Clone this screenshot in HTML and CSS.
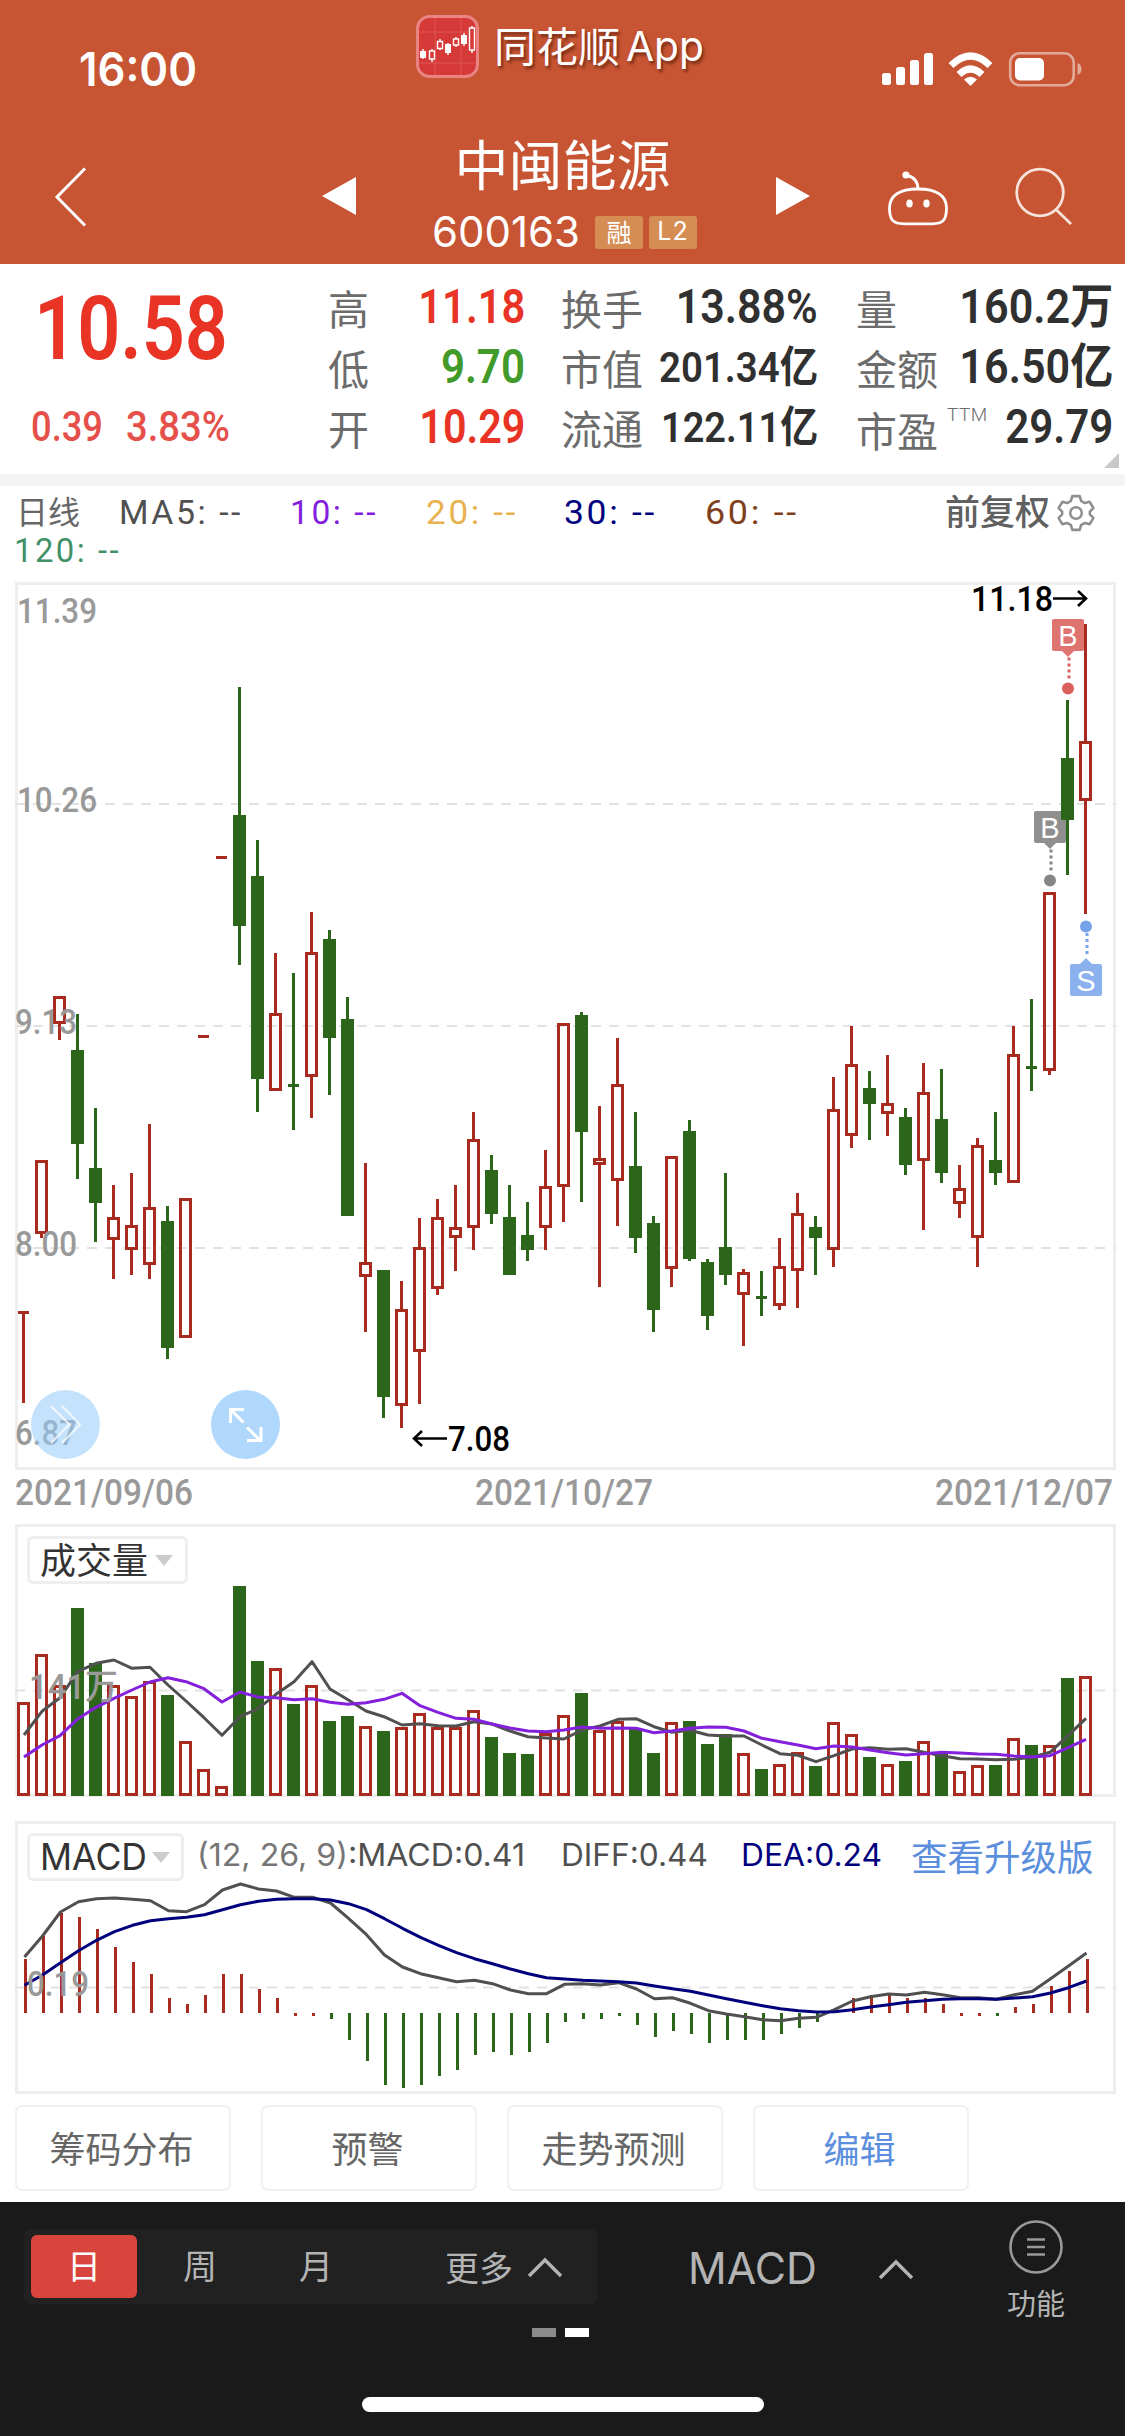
FILE: index.html
```html
<!DOCTYPE html>
<html lang="zh-CN">
<head>
<meta charset="utf-8">
<title>中闽能源 600163</title>
<link rel="stylesheet" href="styles.css">
</head>
<body>
<header class="top">
  <div class="status">
    <span class="clock fit" data-w="118">16:00</span>
    <svg class="logo" viewBox="0 0 63 63" width="63" height="63">
      <rect x="1.5" y="1.5" width="60" height="60" rx="12" fill="#d63a38" stroke="#e98482" stroke-width="3"/>
      <path d="M19 3V60M45 3V60M3 17H60M3 48H60" stroke="#dd5552" stroke-width="1"/>
      <path d="M7 34V44M16 34V47M24 24V35M32 28V40M40 22V32M48 18V31M56 11V38" stroke="#fff" stroke-width="1.4"/>
      <path d="M4 36h6v7h-6zM29 29h6v9h-6zM45 20h6v9h-6z" fill="#fff"/>
      <path d="M13.500 36h5v8h-5zM21.500 26.500h5v7h-5zM37.500 24h5v6h-5zM53.500 13h5v22h-5z" fill="#d63a38" stroke="#fff" stroke-width="1.4"/>
    </svg>
    <span class="app"><span class="fit" data-w="126">同花顺</span><span class="fit app-latin" data-w="78">App</span></span>
    <svg class="phone" viewBox="880 50 204 38" width="204" height="38" fill="#fff">
      <rect x="882" y="73" width="9" height="12" rx="2.500"/><rect x="896" y="67" width="9" height="18" rx="2.500"/><rect x="910" y="60" width="9" height="25" rx="2.500"/><rect x="924" y="53" width="9" height="32" rx="2.500"/>
      <g fill="none" stroke="#fff" stroke-width="7"><path d="M951 65.500Q970.500 46.500 990 65.500"/><path d="M959 74.500Q970.500 63.500 982 74.500"/></g>
      <path d="M964 79.500Q970.500 74 977 79.500L970.500 86Z"/>
      <rect x="1010.200" y="53.200" width="63.500" height="32" rx="9.500" fill="none" stroke="#e3a999" stroke-width="2.600"/>
      <rect x="1015" y="58" width="29" height="22.500" rx="5"/>
      <path d="M1077.500 63q4 1.500 4 6t-4 6z" fill="#e3a999"/>
    </svg>
  </div>
  <div class="nav">
    <svg class="back" viewBox="54 166 33 62" width="33" height="62"><path d="M85 168.500L57 197L85 225.500" fill="none" stroke="#fff" stroke-width="3"/></svg>
    <svg class="prev" viewBox="0 0 34 38" width="34" height="38"><path d="M0 19L34 0V38Z" fill="#fff"/></svg>
    <div class="title">
      <h1>中闽能源</h1>
      <div class="code"><span class="fit code-num" data-w="148">600163</span><span class="badge">融</span><span class="badge l2">L2</span></div>
    </div>
    <svg class="next" viewBox="0 0 34 38" width="34" height="38"><path d="M34 19L0 0V38Z" fill="#fff"/></svg>
    <svg class="robot" viewBox="886 169 64 58" width="64" height="58" fill="none" stroke="#fff" stroke-width="2.800">
      <path d="M918 189C899 189 889.500 196 889.500 208C889.500 220 893 223.800 904 223.800H932C943 223.800 946.500 220 946.500 208C946.500 196 937 189 918 189Z"/>
      <path d="M918 189Q917.500 177.500 907 175.500"/><circle cx="906" cy="175" r="2.200" fill="#fff"/>
      <g fill="#fff" stroke="none"><ellipse cx="909.500" cy="203.500" rx="3.200" ry="4"/><ellipse cx="926.500" cy="203.500" rx="3.200" ry="4"/></g>
    </svg>
    <svg class="search" viewBox="1014 167 59 59" width="59" height="59" fill="none" stroke="#f7e2da" stroke-width="2.800"><circle cx="1040" cy="192.500" r="23.300"/><path d="M1056 209.500L1071 224"/></svg>
  </div>
</header>

<section class="quote">
  <div class="price">
    <div class="last"><span class="fit" data-w="194">10.58</span></div>
    <div class="change"><span class="fit" data-w="72">0.39</span><span class="fit" data-w="104">3.83%</span></div>
  </div>
  <dl class="stats c1">
    <dt>高</dt><dd class="up"><span class="fit" data-w="107">11.18</span></dd>
    <dt>低</dt><dd class="down"><span class="fit" data-w="84">9.70</span></dd>
    <dt>开</dt><dd class="up"><span class="fit" data-w="106">10.29</span></dd>
  </dl>
  <dl class="stats c2">
    <dt>换手</dt><dd><span class="fit" data-w="142">13.88%</span></dd>
    <dt>市值</dt><dd class="small"><span class="fit" data-w="159">201.34亿</span></dd>
    <dt>流通</dt><dd class="small"><span class="fit" data-w="157">122.11亿</span></dd>
  </dl>
  <dl class="stats c3">
    <dt>量</dt><dd><span class="fit" data-w="154">160.2万</span></dd>
    <dt>金额</dt><dd><span class="fit" data-w="154">16.50亿</span></dd>
    <dt class="pe">市盈<sup>TTM</sup></dt><dd><span class="fit" data-w="108">29.79</span></dd>
  </dl>
  <i class="corner"></i>
</section>

<section class="ma">
  <div class="ma-list">
    <span class="cn">日线</span><span class="m5 fit" data-w="124">MA5: --</span><span class="m10 fit" data-w="88">10: --</span><span class="m20 fit" data-w="92">20: --</span><span class="m30 fit" data-w="93">30: --</span><span class="m60 fit" data-w="94">60: --</span>
    <span class="adjust">前复权</span>
    <svg class="gear" viewBox="0 0 36 36" width="38" height="38" fill="none" stroke="#8f8f8f" stroke-width="2.400" stroke-linejoin="round"><path d="M14.500 2h7l1.300 4.600 3.600 2 4.600-1.200 3.500 6-3.400 3.300v2.600l3.400 3.300-3.500 6-4.600-1.200-3.600 2L21.500 34h-7l-1.300-4.600-3.600-2-4.600 1.200-3.500-6 3.400-3.300v-2.600L1.500 13.400l3.500-6 4.600 1.200 3.600-2z"/><circle cx="18" cy="18" r="5.500"/></svg>
  </div>
  <span class="m120 fit" data-w="107">120: --</span>
</section>

<svg id="kline" class="chart" viewBox="15 582 1101 888" width="1101" height="888"></svg>
<div class="dates"><span class="fit" data-w="178">2021/09/06</span><span class="fit" data-w="178">2021/10/27</span><span class="fit" data-w="178">2021/12/07</span></div>

<section class="panel">
  <svg id="volume" class="chart" viewBox="15 1524 1101 273" width="1101" height="273"></svg>
  <div class="panel-head"><button class="pick vol"><span>成交量</span><i></i></button></div>
</section>

<section class="panel">
  <svg id="macd" class="chart" viewBox="15 1821 1101 273" width="1101" height="273"></svg>
  <div class="panel-head macd-head">
    <button class="pick"><span class="fit" data-w="107">MACD</span><i></i></button>
    <span class="param fit" data-w="328"><em>(12, 26, 9)</em>:MACD:0.41</span>
    <span class="diff fit" data-w="147">DIFF:0.44</span>
    <span class="dea fit" data-w="141">DEA:0.24</span>
    <a class="upgrade">查看升级版</a>
  </div>
</section>

<div class="tools"><button>筹码分布</button><button>预警</button><button>走势预测</button><button class="edit">编辑</button></div>

<footer class="bar">
  <div class="bar-row">
    <div class="periods">
      <span class="on">日</span><span>周</span><span>月</span>
      <span class="more">更多<svg viewBox="0 0 36 22" width="36" height="22"><path d="M2 20L18 4L34 20" fill="none" stroke="#b4b4b4" stroke-width="3.400"/></svg></span>
    </div>
    <span class="ind fit" data-w="129">MACD</span>
    <svg class="ind-up" viewBox="0 0 36 22" width="36" height="22"><path d="M2 20L18 4L34 20" fill="none" stroke="#b4b4b4" stroke-width="3.400"/></svg>
    <div class="func">
      <svg viewBox="0 0 56 56" width="56" height="56" fill="none" stroke="#999" stroke-width="2.600"><circle cx="28" cy="28" r="25.500"/><path d="M19 20.500H37M19 28H37M19 35.500H37"/></svg>
      功能
    </div>
  </div>
  <div class="pages"><i></i><i class="cur"></i></div>
  <div class="home"></div>
</footer>
<script src="chart.js"></script>
</body>
</html>
```
FILE: styles.css
```css
* { box-sizing: border-box; }
body { margin: 0; width: 1125px; background: #fff; font-family: "Noto Sans CJK SC", sans-serif; color: #303030; }
h1, dl, dt, dd { margin: 0; font-weight: 400; }
button { font: inherit; color: inherit; background: #fff; padding: 0; }
svg { display: block; flex: none; }
em { font-style: normal; }
.fit { display: inline-block; white-space: nowrap; transform-origin: 0 50%; flex: none; }

.top { height: 264px; background: #c75533; color: #fff; }
.status { height: 100px; display: flex; align-items: flex-start; padding-left: 79px; }
.clock { font: 600 46px/60px Inter, sans-serif; margin-top: 39px; }
.logo { margin: 15px 0 0 219px; }
.app { display: flex; margin: 14px 0 0 15px; font-size: 41px; line-height: 60px; text-shadow: 2px 3px 3px rgba(70, 20, 5, .6); width: 371px; gap: 6px; }
.app-latin { font-family: Inter, sans-serif; line-height: 64px; }
.phone { margin: 50px 0 0 15px; }
.nav { height: 164px; display: flex; align-items: flex-start; }
.back { margin: 66px 0 0 54px; }
.prev { margin: 77px 0 0 235px; }
.title { width: 420px; display: flex; flex-direction: column; align-items: center; }
.title h1 { font-size: 54px; line-height: 70px; margin-top: 28px; margin-left: -7px; }
.code { display: flex; align-items: center; margin-top: 14px; width: 266px; height: 40px; margin-left: -2px; }
.code-num { font: 400 42px/40px Inter, sans-serif; }
.badge { width: 48px; height: 33px; border-radius: 3px; background: #d58d54; font-size: 25px; line-height: 31px; text-align: center; margin-left: 15px; flex: none; }
.badge + .badge { margin-left: 6px; font-family: Inter, sans-serif; letter-spacing: 1px; }
.next { margin: 77px 0 0; }
.robot { margin: 69px 0 0 76px; }
.search { margin: 67px 0 0 64px; }

.quote { position: relative; height: 222px; border-bottom: 12px solid #f4f4f4; display: flex; font-family: Roboto, "Noto Sans CJK SC", sans-serif; }
.price { width: 328px; color: #e93325; }
.last { font-size: 89px; font-weight: 600; line-height: 100px; margin: 15px 0 0 34px; }
.change { display: flex; gap: 23px; margin: 23px 0 0 31px; font-size: 42px; font-weight: 500; line-height: 50px; color: #e5504a; }
.stats { display: grid; grid-template-columns: auto 1fr; grid-auto-rows: 60px; padding-top: 16px; line-height: 60px; }
.stats dt { font-size: 41px; color: #6c6c6c; font-family: "Noto Sans CJK SC", sans-serif; white-space: nowrap; line-height: 54px; }
.stats .pe { line-height: 58px; }
.stats dd { font-size: 48px; font-weight: 600; text-align: right; line-height: 54px; }
.stats dd.small { font-size: 43px; }
.stats .up { color: #e93325; }
.stats .down { color: #429a2a; }
.stats sup { font: 300 19px/19px Roboto, sans-serif; vertical-align: 26px; margin: 0 -60px 0 9px; letter-spacing: .5px; }
.c1 { width: 197px; }
.c2 { width: 257px; margin-left: 36px; }
.c3 { width: 257px; margin-left: 38px; }
.corner { position: absolute; right: 6px; bottom: 6px; border-left: 15px solid transparent; border-bottom: 15px solid #c8c8c8; }

.ma { height: 96px; padding: 4px 0 0 16px; font: 400 33px/38px Roboto, "Noto Sans CJK SC", sans-serif; letter-spacing: 2.5px; }
.ma-list { display: flex; height: 42px; }
.cn { width: 103px; font-size: 32px; line-height: 40px; color: #666; font-family: "Noto Sans CJK SC"; letter-spacing: 0; }
.ma-list .fit { line-height: 45px; }
.m5 { color: #505050; }
.m10 { color: #8420dc; margin-left: 47px; }
.m20 { color: #e9b250; margin-left: 48px; }
.m30 { color: #00007d; margin-left: 46px; }
.m60 { color: #7f3f1d; margin-left: 48px; }
.m120 { color: #419068; line-height: 36px; margin-left: -2px; }
.adjust { margin-left: 146px; width: 112px; font: 500 35px/40px "Noto Sans CJK SC"; color: #606060; letter-spacing: 0; }
.gear { margin-top: 4px; }

.chart { margin-left: 15px; overflow: visible; }
.chart text { font-family: Roboto, "Noto Sans CJK SC", sans-serif; }
.axis { font-size: 35px; font-weight: 500; fill: #999; }
.flag { font-size: 35px; font-weight: 500; fill: #000; }
.chart .tag { font-family: "Liberation Sans", sans-serif; font-size: 29px; fill: #fff; text-anchor: middle; }
.dates { height: 54px; margin: 0 12px 0 15px; display: flex; justify-content: space-between; font: 500 36px/46px Roboto, sans-serif; color: #999; }

.panel { display: grid; height: 273px; margin-bottom: 24px; }
.panel > * { grid-area: 1 / 1; }
.panel-head { padding: 12px 0 0 27px; display: flex; align-items: flex-start; }
.pick { width: 157px; height: 48px; border: 3px solid #eee; border-radius: 6px; padding-left: 10px; display: flex; align-items: center; font-size: 36px; line-height: 42px; color: #333; }
.pick .fit { font: 400 37px/42px Inter, sans-serif; }
.pick.vol { width: 161px; }
.pick.vol span { margin-top: -4px; }
.pick i { border: 9px solid transparent; border-top: 11px solid #ccc; border-bottom: 0; margin-left: 5px; }
.pick.vol i { margin-left: 7px; }
.macd-head .fit { font-family: Inter, sans-serif; font-size: 31px; line-height: 44px; color: #505050; }
.macd-head .pick .fit { font-size: 37px; line-height: 42px; color: #333; }
.macd-head em { color: #757575; }
.param { margin-left: 13px; }
.diff { margin-left: 36px; }
.macd-head .dea { margin-left: 33px; color: #00007d; }
.upgrade { margin-left: 29px; font-size: 36.500px; line-height: 45px; color: #5b8fdd; }

.tools { display: flex; gap: 30px; padding-left: 15px; height: 108px; margin-top: -13px; }
.tools button { width: 216px; height: 86px; border: 2px solid #f0f0f0; border-radius: 7px; font-size: 36px; line-height: 78px; padding: 0 3px 3px 0; color: #666; }
.tools .edit { color: #5b8fdd; }

.bar { height: 234px; margin-top: -11px; background: #1a1a1a; color: #b4b4b4; }
.bar-row { height: 126px; display: flex; align-items: flex-start; padding-left: 24px; }
.periods { width: 573px; height: 75px; margin-top: 27px; padding: 6px 7px; background: #212121; border-radius: 6px; display: flex; gap: 10px; font-size: 34px; line-height: 60px; text-align: center; }
.periods span { width: 106px; height: 63px; border-radius: 6px; }
.periods .on { background: #d9453c; color: #fff; }
.periods .more { width: 130px; margin-left: 66px; display: flex; align-items: center; gap: 14px; }
.ind { font: 400 44px/60px Inter, sans-serif; margin: 36px 0 0 91px; }
.ind-up { margin: 56px 0 0 61px; }
.func { margin: 17px 0 0 92px; width: 60px; display: flex; flex-direction: column; align-items: center; font-size: 29px; line-height: 54px; white-space: nowrap; }
.pages { display: flex; justify-content: center; gap: 9px; margin-right: 4px; }
.pages i { width: 24px; height: 9px; background: #8c8c8c; }
.pages .cur { background: #fff; }
.home { width: 402px; height: 15px; margin: 60px auto 0; border-radius: 8px; background: #fff; }
```
FILE: chart.js
```js
const UP = '#a92b20', DOWN = '#2c661a';

// Scale condensed labels to their column width.
document.querySelectorAll('.fit').forEach(el => {
  const n = el.getBoundingClientRect().width, w = +el.dataset.w;
  el.style.transform = `scaleX(${w / n})`;
  if (el.closest('dd')) { el.style.transformOrigin = '100% 50%'; el.style.marginLeft = (w - n) + 'px'; }
  else el.style.marginRight = (w - n) + 'px';
});

const rect = (x, y, w, h, c) => `<rect x="${x}" y="${y}" width="${w}" height="${h}" fill="${c}"/>`;
const hollow = (x, y, w, h) => `<rect x="${x + 1.5}" y="${y + 1.5}" width="${w - 3}" height="${h - 3}" fill="none" stroke="${UP}" stroke-width="3"/>`;
const frame = (y, h) => `<rect x="16.5" y="${y + 1.5}" width="1098" height="${h - 3}" fill="none" stroke="#eee" stroke-width="3"/>`;
const dash = y => `<path d="M15 ${y}H1116" stroke="#e2e2e2" stroke-width="2" stroke-dasharray="10 8"/>`;
const text = (x, y, w, s, c) => `<text x="${x}" y="${y}" class="${c}" textLength="${w}" lengthAdjust="spacingAndGlyphs">${s}</text>`;
const line = (x0, base, vs, c) => `<polyline fill="none" stroke="${c}" stroke-width="3" stroke-linejoin="round" points="${vs.map((v, i) => (x0 + 18 * i) + ',' + (base + v / 3).toFixed(1)).join(' ')}"/>`;

// [rising, high, body top, body bottom, low]
const K = [[1,1311,1311,1314,1403],[1,1160,1160,1234,1238],[1,996,996,1024,1040],[0,1014,1050,1144,1179],[0,1108,1168,1203,1242],[1,1185,1217,1240,1279],[1,1173,1225,1250,1275],[1,1124,1207,1265,1279],[0,1206,1221,1348,1359],[1,1198,1198,1338,1338],[1,1035,1035,1038,1038],[1,856,856,859,859],[0,687,815,926,965],[0,840,876,1079,1112],[1,953,1013,1091,1091],[0,973,1084,1087,1130],[1,912,952,1077,1118],[0,930,939,1038,1095],[0,997,1019,1216,1216],[1,1163,1262,1277,1332],[0,1270,1270,1397,1418],[1,1281,1309,1406,1428],[1,1218,1247,1352,1404],[1,1199,1217,1289,1295],[1,1185,1227,1238,1271],[1,1112,1139,1228,1250],[0,1155,1170,1214,1224],[0,1185,1217,1275,1275],[0,1202,1235,1250,1261],[1,1150,1186,1228,1250],[1,1023,1023,1187,1222],[0,1012,1015,1132,1202],[1,1106,1158,1165,1287],[1,1038,1084,1181,1226],[0,1112,1166,1238,1253],[0,1216,1223,1310,1332],[1,1156,1156,1269,1287],[0,1120,1131,1259,1261],[0,1259,1262,1316,1330],[0,1173,1247,1275,1285],[1,1269,1272,1295,1346],[0,1271,1296,1299,1316],[1,1238,1266,1306,1310],[1,1193,1213,1271,1308],[0,1216,1227,1238,1275],[1,1077,1109,1250,1267],[1,1026,1064,1136,1148],[0,1071,1088,1104,1140],[1,1055,1103,1114,1136],[0,1108,1117,1165,1175],[1,1063,1092,1161,1230],[0,1069,1119,1173,1183],[1,1165,1188,1204,1218],[1,1138,1145,1238,1267],[0,1112,1160,1173,1185],[1,1026,1054,1183,1183],[0,999,1066,1069,1091],[1,892,892,1071,1075],[0,700,758,820,875],[1,624,741,801,914]];
const V = [1702,1654,1685,1608,1663,1685,1696,1681,1695,1741,1769,1786,1586,1661,1668,1704,1685,1721,1716,1726,1731,1727,1713,1727,1727,1710,1737,1753,1754,1733,1715,1693,1730,1721,1728,1753,1722,1721,1744,1734,1753,1769,1764,1752,1766,1722,1734,1757,1764,1761,1741,1754,1771,1765,1765,1738,1745,1745,1678,1676];
const V5 = [675,604,563,484,460,450,475,472,525,573,623,676,620,596,553,515,455,537,569,603,620,645,641,647,648,635,642,663,680,684,687,660,648,628,626,650,667,661,675,678,678,705,731,736,755,737,717,713,718,716,727,737,746,747,749,748,742,727,677,625];
const V10 = [741,705,677,626,592,565,540,516,503,515,536,576,546,561,563,569,566,577,583,578,568,550,587,607,625,628,642,654,663,665,660,651,655,654,655,668,663,655,651,652,663,685,695,705,716,708,711,720,728,735,731,727,729,732,733,738,741,737,713,688];
const M = [447,378,309,321,357,411,456,492,564,582,555,492,492,537,564,618,618,627,690,753,825,834,825,798,780,735,726,735,726,699,636,627,627,618,645,681,663,672,699,690,690,690,672,654,636,609,564,555,555,564,564,582,618,618,618,591,582,528,483,447];
const DIFF = [441,378,306,275,266,264,268,272,302,305,284,240,222,237,243,262,262,279,325,374,435,471,491,503,515,511,521,540,551,551,523,521,525,518,537,566,563,580,602,612,620,629,632,625,622,599,573,560,552,555,547,554,563,563,568,554,544,506,468,429];
const DEA = [526,495,458,422,391,365,346,332,326,322,314,299,284,274,268,266,266,270,281,299,326,355,382,406,428,446,461,477,491,503,507,511,513,515,519,528,536,544,555,566,577,587,596,602,606,605,599,591,584,577,572,568,566,566,568,564,560,549,533,513];

const candles = K.map(([up, hi, t, b, lo], i) => {
  const x = 17 + 18 * i, c = up ? UP : DOWN;
  if (b - t <= 3) return rect(x + 1, t, 11, 3, c) + (lo - hi > 3 ? rect(x + 5, hi, 3, lo - hi, c) : '');
  return up ? rect(x + 5, hi, 3, t - hi, c) + rect(x + 5, b, 3, lo - b, c) + hollow(x, t, 13, b - t)
            : rect(x + 5, hi, 3, lo - hi, c) + rect(x, t, 13, b - t, c);
});

// Trade marker: callout box, dotted leader and anchor dot.
const marker = (x, y, s, box, dot) => {
  const down = s === 'B', dots = down ? y + 38.5 : y - 31;
  let o = rect(x - 16, y, 32, 32, box).replace('/>', ' rx="2"/>');
  o += down ? `<path d="M${x - 6} ${y + 32}h12l-6 6z" fill="${box}"/>` : `<path d="M${x - 6} ${y}h12l-6 -6z" fill="${box}"/>`;
  for (let k = 0; k < 4; k++) o += rect(x - .5, dots + 6 * k, 3, 3, dot);
  o += `<circle cx="${x}" cy="${down ? y + 69.5 : y - 37.5}" r="6" fill="${dot}"/>`;
  return o + `<text class="tag" x="${x}" y="${y + 27}">${s}</text>`;
};

document.getElementById('kline').innerHTML =
  frame(582, 888) + [804, 1026, 1248].map(dash).join('') +
  marker(1050, 811, 'B', '#8f8f8f', '#858585') +
  candles.join('') +
  marker(1068, 619, 'B', '#de7370', '#d9605c') + marker(1086, 964, 'S', '#8ab0ee', '#78a3ea') +
  text(17, 623, 80, '11.39', 'axis') + text(17, 812, 80, '10.26', 'axis') + text(15, 1034, 62, '9.13', 'axis') +
  text(15, 1256, 62, '8.00', 'axis') + text(15, 1445, 62, '6.87', 'axis') +
  text(971, 611, 82, '11.18', 'flag') + text(448, 1451, 62, '7.08', 'flag') +
  '<g fill="none" stroke="#000" stroke-width="2.6"><path d="M1053 598.5H1086M1078 591L1086 598.500L1078 606"/><path d="M447 1438.500H415M422 1431L414 1438.500L422 1446"/></g>' +
  '<circle cx="65.500" cy="1424.500" r="34.500" fill="#95ccf9" fill-opacity=".56"/><circle cx="245.500" cy="1424.500" r="34.500" fill="#b0d8fc"/>' +
  '<g fill="none" stroke="#fff"><path stroke-opacity=".75" stroke-width="2" d="M51 1406L69.500 1424.500L51 1443M62 1406L80 1424.500L62 1443"/><path stroke-width="3" d="M243.500 1422.500L230.500 1409.500M244 1409.500H230.500V1423M247 1427.500L260.500 1440.500M261 1427V1440.500H247"/></g>';

document.getElementById('volume').innerHTML =
  frame(1524, 273) + dash(1690.5) +
  V.map((t, i) => K[i][0] ? hollow(17 + 18 * i, t, 13, 1796 - t) : rect(17 + 18 * i, t, 13, 1796 - t, DOWN)).join('') +
  line(24, 1510, V5, '#505050') + line(24, 1510, V10, '#8420dc') + text(29, 1699, 89, '141万', 'axis');

document.getElementById('macd').innerHTML =
  frame(1821, 273) + dash(1987.5) +
  M.map((v, i) => {
    if (i === 45) return '';
    const y = 1810 + v / 3, base = 2013;
    const red = y < base || [15, 16, 52, 53].includes(i);
    return rect(24 + 18 * i, Math.min(y, base), 3, Math.abs(y - base), red ? UP : DOWN);
  }).join('') +
  line(24.5, 1810, DIFF, '#505050') + line(24.5, 1810, DEA, '#00007d') + text(27, 1996, 62, '0.19', 'axis');
```
